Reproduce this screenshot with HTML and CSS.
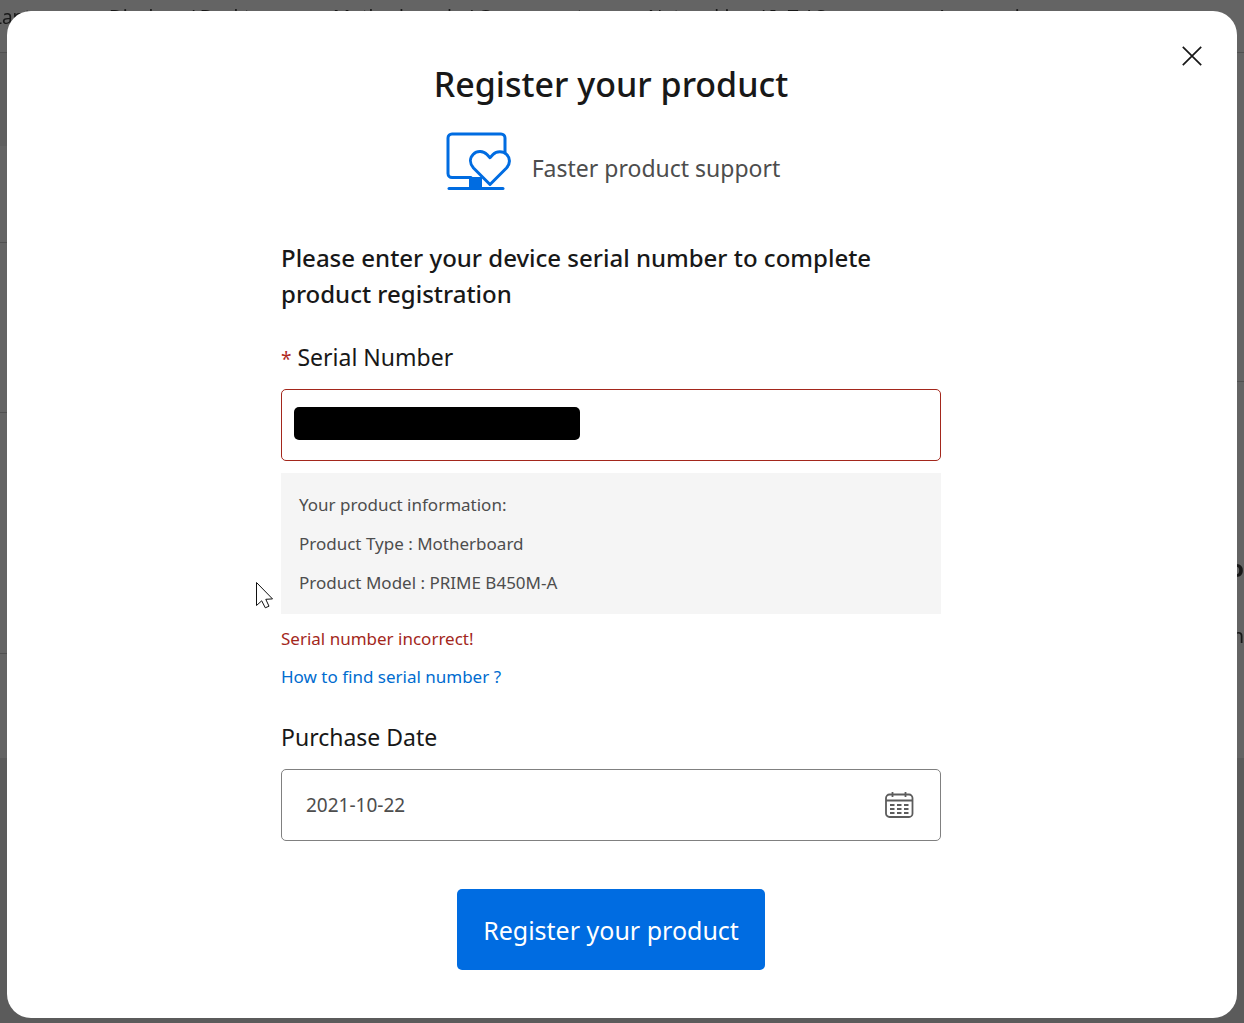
FILE: index.html
```html
<!DOCTYPE html>
<html lang="en">
<head>
<meta charset="utf-8">
<meta name="viewport" content="width=device-width, initial-scale=1">
<title>Register your product</title>
<link rel="stylesheet" href="styles.css">
</head>
<body>
<div class="page" aria-hidden="true">
  <nav class="nav">
    <span>Laptops</span>
    <span>Displays / Desktops</span>
    <span>Motherboards / Components</span>
    <span>Networking / IoT / Servers</span>
    <span>Accessories</span>
  </nav>
  <div class="columns">
    <div class="side">
      <div class="block banner"></div>
      <div class="block summary"></div>
      <div class="block details"></div>
      <div class="block activity"></div>
      <div class="block history"></div>
      <div class="footer"></div>
    </div>
    <div class="side side-right">
      <div class="block profile"></div>
      <div class="promo"><strong>o</strong><span>yn</span></div>
      <div class="footer"></div>
    </div>
  </div>
</div>

<div class="overlay">
  <div class="dialog" role="dialog" aria-modal="true" aria-labelledby="dialog-title">
    <button class="close" type="button" aria-label="Close">
      <svg width="20" height="20" viewBox="0 0 20 20" fill="none" stroke="#181818" stroke-width="1.7"><path d="M.8.8l18.4 18.4M19.2.8.8 19.2"/></svg>
    </button>
    <form class="form">
      <h1 class="title" id="dialog-title">Register your product</h1>
      <div class="benefit">
        <svg width="66" height="60" viewBox="0 0 66 60" fill="none" stroke="#006ce1" stroke-width="3" stroke-linecap="round" stroke-linejoin="round">
          <path d="M25 46.500H6a4 4 0 0 1-4-4V7a4 4 0 0 1 4-4h49a4 4 0 0 1 4 4v14"/>
          <path d="M23 46h13v12H23z" fill="#006ce1" stroke="none"/>
          <path d="M3 57.500h54"/>
          <path d="M44 53.500 27.500 37C23.500 32.500 23.500 27 27.300 23.200s10-3.400 13.700.300l3 3.200 3-3.200c3.700-3.700 10-3.700 13.700 0s3.700 9.300-.200 13.500z" fill="#fff"/>
        </svg>
        <p class="benefit-text">Faster product support</p>
      </div>
      <h2 class="intro">Please enter your device serial number to complete product registration</h2>

      <label class="label" for="serial"><span class="required">*</span> Serial Number</label>
      <div class="field field-error">
        <input class="input" id="serial" type="text" required aria-describedby="serial-error">
        <span class="redaction"></span>
      </div>
      <div class="info">
        <p>Your product information:</p>
        <p>Product Type : Motherboard</p>
        <p>Product Model : PRIME B450M-A</p>
      </div>
      <p class="error" id="serial-error">Serial number incorrect!</p>
      <a class="help" href="#">How to find serial number ?</a>

      <label class="label label-date" for="date">Purchase Date</label>
      <div class="field">
        <input class="input input-date" id="date" type="text" value="2021-10-22">
        <button class="calendar" type="button" aria-label="Choose date">
          <svg width="30" height="28" viewBox="0 0 30 28" fill="none" stroke="#5c5c5c" stroke-width="1.8"><rect x="2" y="3.500" width="26.500" height="22.500" rx="3.500"/><path d="M2 9.500h26.500M8.500 1v5M21.500 1v5"/><path d="M6 14h4.500M13 14h4.500M20 14h4.500M6 18h4.500M13 18h4.500M20 18h4.500M6 22h4.500M13 22h4.500M20 22h4.500"/></svg>
        </button>
      </div>
      <button class="submit" type="submit">Register your product</button>
    </form>
  </div>
  <svg class="cursor" width="19" height="28" viewBox="0 0 19 28" fill="#fff" stroke="#111"><path d="M1.500 1.500v23l5.200-4.700 3.600 7 3.700-1.600-3.200-6.900 6.700-.400z"/></svg>
</div>
</body>
</html>
```
FILE: styles.css
```css
* {
  box-sizing: border-box;
}

body,
h1,
h2,
p {
  margin: 0;
}

body {
  font-family: "Noto Sans", "Open Sans", sans-serif;
  color: #181818;
  background: #646464;
}

button,
input {
  font: inherit;
}

/* Dimmed page behind the dialog */
.page {
  position: fixed;
  inset: 0;
  overflow: hidden;
  display: flex;
  flex-direction: column;
}

.nav {
  display: grid;
  grid-template-columns: 117px 224px 315px 288px 1fr;
  height: 53px;
  margin-left: -8px;
  padding-top: 4px;
  border-bottom: 1px solid #505050;
  font-size: 19px;
  line-height: 26px;
  white-space: nowrap;
}

.columns {
  flex: 1;
  display: flex;
  justify-content: space-between;
}

.side {
  width: 50%;
  display: flex;
  flex-direction: column;
}

.block {
  border-bottom: 1px solid #505050;
}

.banner {
  height: 93px;
  border: 0;
  background: #5f5f5f;
}

.summary {
  height: 97px;
}

.details {
  height: 170px;
}

.activity {
  height: 241px;
}

.history {
  height: 104px;
  border: 0;
}

.footer {
  flex: 1;
  background: #5b5b5b;
}

.profile {
  height: 329px;
}

.promo {
  display: flex;
  flex-direction: column;
  align-items: flex-end;
  height: 376px;
  padding-top: 168px;
  gap: 32px;
  font-size: 20px;
  line-height: 36px;
}

.promo strong {
  font-size: 24px;
}

/* Dialog */
.overlay {
  position: relative;
  min-height: 100vh;
  padding: 11px 7px 5px;
  display: flex;
}

.dialog {
  position: relative;
  flex: 1;
  padding: 48px 22px 48px 0;
  border-radius: 24px;
  background: #fff;
}

.close {
  position: absolute;
  top: 35px;
  right: 35px;
  width: 20px;
  height: 20px;
  padding: 0;
  border: 0;
  background: none;
}

.close svg,
.calendar svg {
  display: block;
}

.form {
  display: flex;
  flex-direction: column;
  max-width: 660px;
  margin: 0 auto;
}

.title {
  font-size: 34px;
  line-height: 50px;
  font-weight: 500;
  text-align: center;
}

.benefit {
  display: flex;
  justify-content: center;
  align-items: flex-end;
  gap: 20px;
  margin-top: 22px;
  padding-left: 4px;
}

.benefit-text {
  font-size: 23px;
  line-height: 46px;
  color: #4d4d4d;
}

.intro {
  margin-top: 49px;
  font-size: 24px;
  line-height: 36px;
  font-weight: 500;
}

.label {
  margin-top: 27px;
  font-size: 23px;
  line-height: 36px;
}

.label-date {
  margin-top: 23px;
}

.required {
  font-size: 19px;
  line-height: 1;
  color: #b02a1f;
}

.field {
  position: relative;
  display: flex;
  align-items: center;
  height: 72px;
  margin-top: 14px;
  padding: 0 24px;
  border: 1px solid #808080;
  border-radius: 5px;
}

.field-error {
  padding: 0 12px;
  border-color: #a3271c;
}

.input {
  flex: 1;
  min-width: 0;
  height: 100%;
  padding: 0;
  border: 0;
  outline: 0;
  background: none;
  color: #4d4d4d;
}

.input-date {
  font-size: 19px;
}

.redaction {
  position: absolute;
  left: 12px;
  top: 17px;
  width: 286px;
  height: 33px;
  border-radius: 5px;
  background: #000;
}

.calendar {
  padding: 0 2px 0 0;
  border: 0;
  background: none;
}

.info {
  margin-top: 12px;
  padding: 12px 18px;
  background: #f5f5f5;
  color: #4d4d4d;
  font-size: 17px;
  line-height: 39px;
}

.error,
.help {
  font-size: 17px;
  line-height: 38px;
}

.error {
  margin-top: 6px;
  color: #a3271c;
}

.help {
  align-self: flex-start;
  color: #006ccf;
  text-decoration: none;
}

.submit {
  align-self: center;
  height: 81px;
  margin-top: 48px;
  padding: 0 26px;
  border: 0;
  border-radius: 5px;
  background: #006ce1;
  color: #fff;
  font-size: 25px;
}

.cursor {
  position: absolute;
  left: 255px;
  top: 581px;
}
```
